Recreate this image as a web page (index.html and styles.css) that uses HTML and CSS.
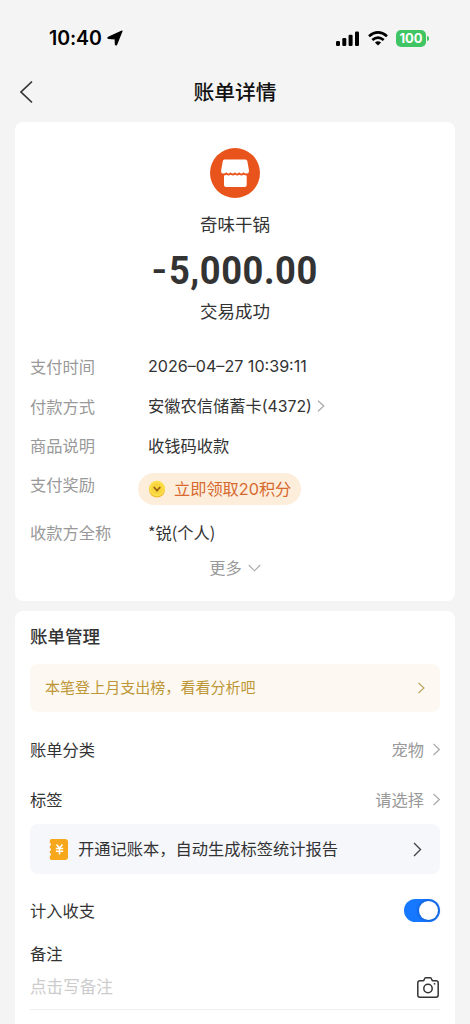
FILE: index.html
```html
<!DOCTYPE html>
<html lang="zh-CN">
<head>
<meta charset="utf-8">
<meta name="viewport" content="width=device-width, initial-scale=1">
<title>账单详情</title>
<link rel="stylesheet" href="styles.css">
</head>
<body>
<div class="status-bar">
  <div class="clock"><span class="time">10:40</span>
    <svg class="locate" width="16" height="16" viewBox="0 0 16 16"><path d="M15 1 9.600 14.500c-.3.700-1.200.6-1.200-.2L8.200 8.800 1.600 8.400c-.8-.1-.9-.9-.2-1.200Z" fill="#000" stroke="#000" stroke-width="1.200" stroke-linejoin="round"/></svg>
  </div>
  <div class="signals">
    <svg width="24" height="15" viewBox="0 0 24 15"><rect x="0" y="10" width="4" height="5" rx="1.200"/><rect x="6.300" y="7" width="4" height="8" rx="1.200"/><rect x="12.600" y="3.800" width="4" height="11.200" rx="1.200"/><rect x="19" y=".5" width="4" height="14.500" rx="1.200"/></svg>
    <svg class="wifi" width="20" height="15" viewBox="0 0 20 15" fill="none" stroke="#000" stroke-width="2.700"><path d="M1 5.200Q10-2.400 19 5.200"/><path d="M4.300 9q5.700-4.800 11.400 0"/><path d="M10 14.500 6.900 11.600q3.100-2.500 6.200 0Z" fill="#000" stroke="none"/></svg>
    <div class="battery"><span class="level">100</span><i class="cap"></i></div>
  </div>
</div>
<header class="nav">
  <svg class="back" width="14" height="24" viewBox="0 0 14 24" fill="none" stroke="#333" stroke-width="1.700"><path d="M13 1.500 2 12l11 10.500"/></svg>
  <h1 class="title">账单详情</h1>
</header>
<main class="content">
  <section class="card summary">
    <svg class="shop" width="50" height="50" viewBox="0 0 50 50"><circle cx="25" cy="25" r="25" fill="#e8541b"/><path d="M14.500 11.500h21q1.500 0 1.800 1.500l1.700 9.500q.3 2.500-2.100 3-2.100.2-3.400-1.200-2 2.400-4.300 0-2.200 2.400-4.300 0-2.200 2.400-4.300 0-2.200 2.400-4.300 0-1.300 1.400-3.400 1.200-2.200-.5-1.800-3l1.700-9.500q.3-1.500 1.700-1.500Z" fill="#fff"/><path d="M14 27.600q1.500-.1 2.500-.8 2 1.500 4.200 0 2.200 1.500 4.400 0 2.200 1.500 4.300 0 2.200 1.500 4.300 0 1 .7 3 .8V37q0 2-2 2H16q-2 0-2-2Z" fill="#fff"/></svg>
    <div class="merchant">奇味干锅</div>
    <div class="amount"><span class="minus">-</span>5,000.00</div>
    <div class="state">交易成功</div>
    <div class="details">
      <div class="row"><span class="label">支付时间</span><span class="value date">2026–04–27 10:39:11</span></div>
      <div class="row"><span class="label">付款方式</span><span class="value">安徽农信储蓄卡<span class="latin">(4372)</span></span><svg class="arrow" width="8" height="12" viewBox="0 0 8 12"><path d="m1 .8 5.800 5.200L1 11.200"/></svg></div>
      <div class="row"><span class="label">商品说明</span><span class="value">收钱码收款</span></div>
      <div class="row reward"><span class="label">支付奖励</span><div class="pill"><svg width="18" height="18" viewBox="0 0 18 18"><circle cx="9" cy="9.500" r="8" fill="#f1bd2c"/><circle cx="9" cy="8.500" r="7.800" fill="#fbdf4b"/><circle cx="9" cy="8.700" r="5.800" fill="#f8d43d"/><path d="m5.800 7 3.200 3.600L12.200 7" fill="none" stroke="#9a6415" stroke-width="1.800"/></svg><span>立即领取<span class="points">20</span>积分</span></div></div>
      <div class="row payee"><span class="label">收款方全称</span><span class="value">*锐(个人)</span></div>
    </div>
    <div class="more"><span>更多</span><svg width="13" height="8" viewBox="0 0 13 8"><path d="m.8 1 5.700 5.800L12.200 1" fill="none" stroke="#aaa" stroke-width="1.100"/></svg></div>
  </section>
  <section class="card manage">
    <h2 class="heading">账单管理</h2>
    <div class="banner gold"><span>本笔登上月支出榜，看看分析吧</span><svg class="arrow" width="8" height="12" viewBox="0 0 8 12"><path d="m1.500 1 5.500 5-5.500 5"/></svg></div>
    <div class="item category"><span>账单分类</span><span class="choice">宠物<svg class="arrow" width="8" height="13" viewBox="0 0 8 13"><path d="m1.500 1 5.800 5.500L1.500 12"/></svg></span></div>
    <div class="item tags"><span>标签</span><span class="choice">请选择<svg class="arrow" width="8" height="13" viewBox="0 0 8 13"><path d="m1.500 1 5.800 5.500L1.500 12"/></svg></span></div>
    <div class="banner book"><svg class="ledger" width="19" height="21" viewBox="0 0 19 21"><path d="M2.500 0H16q3 0 3 3v15q0 3-3 3H2.500Q.8 21 .8 19v-2.200a1.300 1.300 0 0 0 0-2.600v-2.400a1.300 1.300 0 0 0 0-2.600V6.800a1.300 1.300 0 0 0 0-2.600V2Q.8 0 2.500 0Z" fill="#f6a71c"/><path d="m7.500 5.500 3 3.500 3-3.500M6.800 9.500h7.400M6.800 12.200h7.400M10.500 9v6.500" fill="none" stroke="#fff" stroke-width="1.500"/></svg><span>开通记账本，自动生成标签统计报告</span><svg class="arrow" width="9" height="15" viewBox="0 0 9 15"><path d="m1 1 6.500 6.500L1 14"/></svg></div>
    <div class="item include"><span>计入收支</span><span class="switch"><i class="knob"></i></span></div>
    <div class="note-label">备注</div>
    <div class="item note"><span>点击写备注</span><svg width="22" height="21" viewBox="0 0 22 21" fill="none" stroke="#333" stroke-width="1.500"><path d="M3 3.700h3.200q.6 0 .8-.7l.4-1.100q.3-1.100 1.400-1.100h4.400q1.100 0 1.400 1.100L15 3q.2.700.8.700H19q2.200 0 2.200 2.200V18q0 2.200-2.200 2.200H3Q.8 20.200.8 18V5.900Q.8 3.700 3 3.700Z"/><circle cx="11" cy="11.500" r="4.200"/><path d="M16.800 6.800h1.500"/></svg></div>
  </section>
</main>
</body>
</html>
```
FILE: styles.css
```css
* { box-sizing: border-box; }
body {
  margin: 0;
  height: 1024px;
  overflow: hidden;
  display: flex;
  flex-direction: column;
  background: #f4f4f4;
  color: #333;
  font-family: "Noto Sans CJK SC", sans-serif;
  font-size: 16.25px;
  line-height: 24px;
}
h1, h2 { margin: 0; }
svg { display: block; flex: none; }
.status-bar {
  height: 76px;
  flex: none;
  display: flex;
  justify-content: space-between;
  align-items: center;
  padding: 0 41px 0 49px;
}
.clock { display: flex; align-items: center; gap: 5px; }
.time { font: 600 19.5px/24px Inter, sans-serif; color: #000; letter-spacing: -.1px; }
.signals { display: flex; align-items: center; }
.wifi { margin: 0 8px; }
.battery { display: flex; align-items: center; gap: 1px; }
.level {
  width: 30px;
  height: 17px;
  border-radius: 5px;
  background: #3fc563;
  color: #fff;
  text-align: center;
  font: 700 13px/17px Inter, sans-serif;
}
.cap { width: 2px; height: 5px; border-radius: 0 2px 2px 0; background: #3fc563; }
.nav {
  height: 46px;
  flex: none;
  display: grid;
  grid-template-columns: 14px 1fr 14px;
  padding: 0 19px;
}
.back { margin-top: 4px; }
.title { text-align: center; font-size: 20.8px; font-weight: 500; line-height: 30px; color: #111; }
.content { padding: 0 15px; display: flex; flex-direction: column; gap: 10px; }
.card { background: #fff; border-radius: 8px; padding: 0 15px; }
.summary {
  height: 479px;
  padding-top: 26px;
  display: flex;
  flex-direction: column;
  align-items: center;
}
.merchant { font-size: 17.5px; line-height: 28px; margin-top: 12px; }
.amount { font: 700 39.5px/48px Roboto, sans-serif; margin-top: 9px; color: #333; letter-spacing: .6px; transform: scaleX(.92); }
.minus { display: inline-block; transform: translateY(-1px) scale(1.1, .85); margin-right: 2px; }
.state { font-size: 17.5px; line-height: 28px; margin-top: 2px; }
.details { width: 100%; margin-top: 21px; }
.row { height: 39.7px; display: flex; align-items: center; }
.label { width: 118px; color: #999; }
.date { font-family: Inter, sans-serif; font-size: 16.1px; }
.latin { font-family: Inter, sans-serif; font-size: 15.8px; }
.arrow { fill: none; stroke: #aaa; stroke-width: 1.2; }
.row .arrow { margin-left: 5px; }
.reward { height: 47px; align-items: flex-start; padding-top: 7px; }
.pill {
  width: 163px;
  height: 32px;
  margin: 1px 0 0 -10px;
  border-radius: 16px;
  background: #fdeedc;
  color: #d7692f;
  display: flex;
  align-items: center;
  padding-left: 10px;
  gap: 8px;
}
.points { font-family: Inter, sans-serif; }
.pill > span { margin-top: -1px; letter-spacing: -.05px; }
.more { display: flex; align-items: center; gap: 6px; margin-top: 3px; color: #999; }
.more svg { margin-top: 3px; }
.manage { height: 440px; padding-top: 11px; }
.heading { font-size: 17.5px; font-weight: 500; line-height: 28px; }
.banner { height: 48px; border-radius: 8px; display: flex; align-items: center; padding: 0 15px; }
.banner .arrow { margin-left: auto; }
.banner > span { margin-top: -2px; }
.gold { margin-top: 14px; background: #fdf9f2; color: #bd9636; font-size: 15.05px; }
.gold .arrow { stroke: #bba663; }
.item { display: flex; justify-content: space-between; align-items: center; }
.category { margin-top: 12px; height: 50px; }
.tags { height: 50px; }
.choice { display: flex; align-items: center; gap: 8px; color: #999; }
.book { height: 50px; background: #f5f7fb; padding: 0 18px 0 19px; }
.book .arrow { stroke: #444; stroke-width: 1.4; }
.ledger { margin-right: 10px; }
.include { margin-top: 12px; height: 49px; }
.include > span:first-child { margin-top: -2px; }
.switch { width: 36px; height: 23px; border-radius: 12px; background: #1677ff; display: flex; align-items: center; justify-content: flex-end; padding: 2px; }
.knob { width: 19px; height: 19px; border-radius: 50%; background: #fff; box-shadow: 0 0 3px 1px rgba(0, 40, 90, .3); }
.note-label { margin-top: 6px; }
.note { height: 45px; color: #ccc; border-bottom: 1px solid #eee; padding-right: 1px; font-size: 16.6px; }
.note span { margin-top: -3px; }
.note svg { margin-top: 0; }
```
